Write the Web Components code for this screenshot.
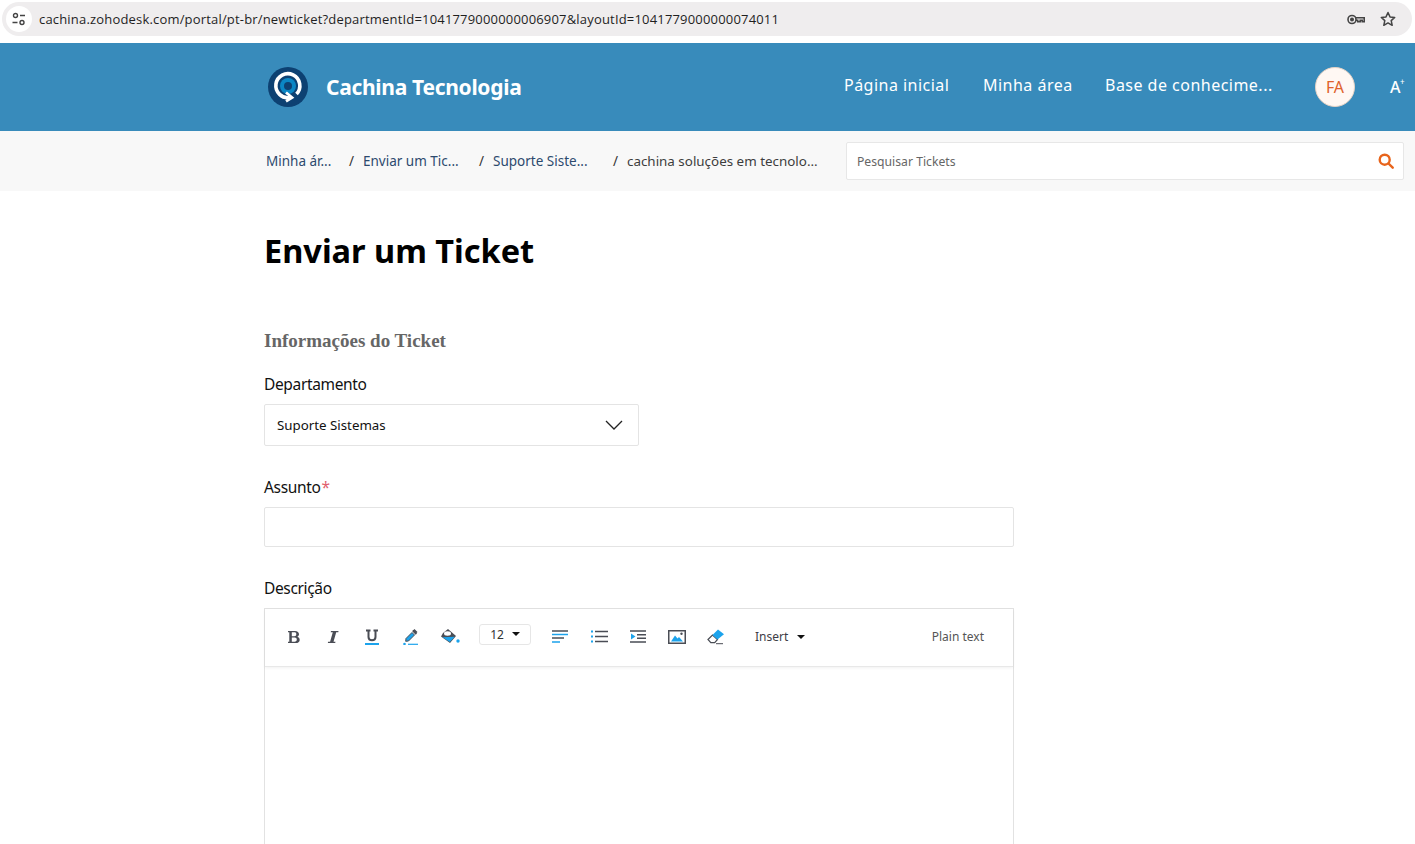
<!DOCTYPE html>
<html lang="pt-BR">
<head>
<meta charset="utf-8">
<title>Enviar um Ticket</title>
<style>
  html, body { margin: 0; height: 844px; overflow: hidden; background: #fff; }
  body { font-family: "Noto Sans", "DejaVu Sans", sans-serif; color: #000; }
</style>
</head>
<body>
<browser-bar url="cachina.zohodesk.com/portal/pt-br/newticket?departmentId=1041779000000006907&amp;layoutId=1041779000000074011"></browser-bar>
<site-header></site-header>
<crumb-bar></crumb-bar>
<ticket-form></ticket-form>

<script>
class BrowserBar extends HTMLElement {
  constructor() {
    super();
    this.attachShadow({ mode: 'open' });
    this.shadowRoot.innerHTML = `
      <style>
        :host { display: block; height: 43px; padding: 2px 3px 0 2px; box-sizing: border-box; background: #fff; }
        .pill { display: flex; align-items: center; height: 34px; border-radius: 17px; background: #efedee; padding: 0 16px 0 4px; }
        .site { width: 26px; height: 26px; border-radius: 50%; background: #fff; display: flex; align-items: center; justify-content: center; margin-right: 7px; }
        .url { flex: 1; font: 13px "Open Sans", sans-serif; color: #1f1f1f; white-space: nowrap; letter-spacing: .18px; }
        .icons { display: flex; gap: 15px; align-items: center; }
      </style>
      <div class="pill">
        <div class="site">
          <svg width="16" height="14" viewBox="0 0 16 14" fill="none" stroke="#444" stroke-width="1.4">
            <circle cx="4.5" cy="3.5" r="2"/><path d="M9 3.5h5M1.5 10.5h5"/><circle cx="11" cy="10.5" r="2"/>
          </svg>
        </div>
        <span class="url"></span>
        <div class="icons">
          <svg width="18" height="11" viewBox="0 0 18 11" fill="none" stroke="#444" stroke-width="1.600">
            <circle cx="5" cy="5.500" r="4"/><path d="M9 3.800h8.200v4h-2v-1.500h-2v1.500h-2.500v-1.500h-1.700"/><circle cx="5" cy="5.500" r="1.200" fill="#444"/>
          </svg>
          <svg width="16" height="16" viewBox="0 0 16 16" fill="none" stroke="#444" stroke-width="1.500" stroke-linejoin="round">
            <path d="M8 1.500l2 4.400 4.700.5-3.500 3.200 1 4.700L8 11.900l-4.200 2.400 1-4.700L1.300 6.400 6 5.900z"/>
          </svg>
        </div>
      </div>
    `;
  }
  connectedCallback() {
    this.shadowRoot.querySelector('.url').textContent = this.getAttribute('url');
  }
}

class SiteHeader extends HTMLElement {
  constructor() {
    super();
    this.attachShadow({ mode: 'open' });
    this.shadowRoot.innerHTML = `
      <style>
        :host { display: flex; align-items: center; height: 88px; background: #388bbb; color: #fff; padding-left: 268px; box-sizing: border-box; }
        .logo { width: 40px; height: 40px; flex: none; }
        h1 { margin: 0 0 0 18px; font: bold 21px "Noto Sans", sans-serif; letter-spacing: -.3px; width: 518px; white-space: nowrap; }
        nav { display: flex; font-size: 16px; margin-top: -5px; letter-spacing: .48px; }
        nav a { white-space: nowrap; color: #fff; }
        nav a:nth-child(1) { width: 139px; }
        nav a:nth-child(2) { width: 122px; }
        nav a:nth-child(3) { width: 210px; }
        .avatar { width: 38px; height: 38px; border-radius: 50%; background: #fff8f3; border: 1px solid #e6d3c5; color: #e0622a; font-size: 16px; display: flex; align-items: center; justify-content: center; flex: none; }
        .size { margin-left: 35px; font-size: 16px; font-weight: 500; position: relative; line-height: 16px; }
        .size sup { position: absolute; left: 10px; top: -1px; font-size: 8px; line-height: 1; }
      </style>
      <svg class="logo" viewBox="0 0 40 40">
        <circle cx="20" cy="20" r="20" fill="#0d4172"/>
        <circle cx="20" cy="19" r="8" fill="#0b86c4"/>
        <circle cx="20" cy="19" r="4" fill="#0d4172"/>
        <path d="M22 30.500A12 12 0 1 1 28.500 27" fill="none" stroke="#fff" stroke-width="3.600"/>
        <path d="M18 25.500l6 5-6 3.800" fill="none" stroke="#fff" stroke-width="2.800"/>
      </svg>
      <h1>Cachina Tecnologia</h1>
      <nav>
        <a>Página inicial</a>
        <a>Minha área</a>
        <a>Base de conhecime...</a>
      </nav>
      <div class="avatar">FA</div>
      <div class="size">A<sup>+</sup></div>
    `;
  }
}

class CrumbBar extends HTMLElement {
  constructor() {
    super();
    this.attachShadow({ mode: 'open' });
    this.shadowRoot.innerHTML = `
      <style>
        :host { display: flex; align-items: center; height: 60px; background: #f8f8f8; padding: 0 11px 0 266px; box-sizing: border-box; }
        .crumbs { display: flex; width: 580px; flex: none; font-size: 13.500px; color: #2d4a6e; white-space: nowrap; margin-top: -1px; }
        .crumbs span { display: block; }
        .sep { color: #333; }
        .last { color: #3d3d3d; font-size: 13.400px; }
        .search { flex: 1; height: 38px; box-sizing: border-box; border: 1px solid #e7e7e7; border-radius: 2px; background: #fff; display: flex; align-items: center; justify-content: space-between; padding: 0 9px 0 10px; font-size: 12.200px; color: #666; }
      </style>
      <div class="crumbs">
        <span style="width:83px">Minha ár...</span>
        <span class="sep" style="width:14px">/</span>
        <span style="width:116px">Enviar um Tic...</span>
        <span class="sep" style="width:14px">/</span>
        <span style="width:120px">Suporte Siste...</span>
        <span class="sep" style="width:14px">/</span>
        <span class="last">cachina soluções em tecnolo...</span>
      </div>
      <div class="search">
        <span>Pesquisar Tickets</span>
        <svg width="16" height="16" viewBox="0 0 16 16" fill="none" stroke="#e8641b" stroke-width="2.400">
          <circle cx="6.700" cy="6.700" r="5"/><path d="M10.500 10.500l4.200 4.200" stroke-linecap="round"/>
        </svg>
      </div>
    `;
  }
}

class FormField extends HTMLElement {
  constructor() {
    super();
    this.attachShadow({ mode: 'open' });
    this.shadowRoot.innerHTML = `
      <style>
        :host { display: block; }
        label { display: block; font-size: 15.500px; line-height: 22px; margin-bottom: 9px; color: #111; letter-spacing: -.35px; }
        .req { color: #e0616f; display: none; margin-left: 1px; }
        :host([required]) .req { display: inline; }
      </style>
      <label></label>
      <slot></slot>
    `;
  }
  connectedCallback() {
    const label = this.shadowRoot.querySelector('label');
    label.innerHTML = '<span class="name"></span><span class="req">*</span>';
    label.querySelector('.name').textContent = this.getAttribute('label');
  }
}

class RichEditor extends HTMLElement {
  constructor() {
    super();
    this.attachShadow({ mode: 'open' });
    const dark = '#4a4d55', blue = '#1ca3ec';
    this.shadowRoot.innerHTML = `
      <style>
        :host { display: block; width: 750px; height: 260px; box-sizing: border-box; border: 1px solid #e2e2e2; border-bottom: 0; }
        .bar { display: flex; align-items: center; height: 58px; box-sizing: border-box; padding: 0 29px 2px 19px; border-bottom: 1px solid #e8e8e8; box-shadow: 0 1px 3px rgba(0,0,0,.06); }
        .btn { width: 20px; height: 20px; margin-right: 19px; flex: none; display: flex; align-items: center; justify-content: center; }
        .size { flex: none; width: 52px; height: 21px; box-sizing: border-box; border: 1px solid #e6e6e6; border-radius: 3px; font-size: 12px; color: #333; display: flex; align-items: center; justify-content: center; gap: 8px; margin: -5px 19px 0 0; }
        .caret { width: 0; height: 0; border: 4px solid transparent; border-top-color: #111; border-bottom: 0; }
        .insert { font-size: 12px; color: #3d3d46; display: flex; align-items: center; gap: 9px; margin-left: 29px; }
        .plain { margin-left: auto; font-size: 12px; color: #555; }
        svg { display: block; }
      </style>
      <div class="bar">
        <div class="btn"><svg width="14" height="14" viewBox="0 0 14 14"><path fill-rule="evenodd" fill="${dark}" d="M1 1h7c2.500 0 4 1.300 4 3.200 0 1.200-.7 2.200-1.800 2.600 1.500.4 2.500 1.500 2.500 3.100 0 2.100-1.600 3.100-4.200 3.100H1v-1.200h1.300V2.200H1zM4.800 2.300v3.900h2.500c1.300 0 2-.7 2-2s-.7-1.900-2-1.900zM4.800 7.400v4.300h2.800c1.400 0 2.200-.8 2.200-2.200s-.8-2.100-2.200-2.100z"/></svg></div>
        <div class="btn"><svg width="12" height="14" viewBox="0 0 12 14"><path fill="${dark}" d="M4 1h7.500l-.2 1.300H9.200L6.500 11.700h2l-.3 1.300H.8l.3-1.300h2l2.700-9.400H3.700z"/></svg></div>
        <div class="btn"><svg width="14" height="16" viewBox="0 0 14 16"><path fill="none" stroke="${dark}" stroke-width="2" d="M1 1.500h4.500M3.500 1.500v6.500c0 2.200 1.300 3.200 3.500 3.200s3.500-1 3.500-3.200V1.500M8.500 1.500h4.500"/><path stroke="${blue}" stroke-width="2" d="M0 15h14"/></svg></div>
        <div class="btn"><svg width="16" height="16" viewBox="0 0 16 16"><path fill="${dark}" d="M10.500 1l1-1 3 3-1 1 .5.500-1.300 1.300-3.500-3.500L10 1z"/><path fill="${blue}" stroke="${dark}" d="M9 3.500l2.500 2.500-6 6-2.800.3.300-2.800z"/><circle cx="1.500" cy="15" r="1.300" fill="${blue}"/><path stroke="${blue}" stroke-width="1.200" d="M5 15.300h10"/></svg></div>
        <div class="btn"><svg width="20" height="16" viewBox="0 0 20 16"><path fill="${dark}" d="M8 0l8 7-6 7L1 7.500 3 4z"/><path fill="${blue}" d="M2.500 8.300l12.300-.6-5 5.300z"/><ellipse cx="7.500" cy="4.500" rx="3.500" ry="2.200" fill="#fff"/><circle cx="18" cy="12" r="1.700" fill="${blue}"/></svg></div>
        <div class="size">12<span class="caret"></span></div>
        <div class="btn"><svg width="16" height="13" viewBox="0 0 16 13"><path stroke="${dark}" stroke-width="1.500" d="M0 1h16M0 8h12"/><path stroke="${blue}" stroke-width="1.500" d="M0 4.500h16M0 12h8"/></svg></div>
        <div class="btn"><svg width="17" height="13" viewBox="0 0 17 13"><path stroke="${dark}" stroke-width="1.600" d="M4 1.500h13M4 6.500h13M4 11.500h13"/><path stroke="${blue}" stroke-width="1.800" d="M0 1.500h2M0 6.500h2M0 11.500h2"/></svg></div>
        <div class="btn"><svg width="16" height="13" viewBox="0 0 16 13"><path stroke="${dark}" stroke-width="1.500" d="M0 1h16M7 4.700h9M7 8.300h9M0 12h16"/><path fill="${blue}" d="M1 3.500l4.500 3-4.500 3z"/></svg></div>
        <div class="btn"><svg width="18" height="14" viewBox="0 0 18 14"><rect x=".75" y=".75" width="16.500" height="12.500" fill="#fff" stroke="${dark}" stroke-width="1.500"/><path fill="${blue}" d="M3 11.500l4-6 2.500 3 1.500-1.500 4 4.500z"/><circle cx="13.500" cy="3.700" r="1.200" fill="${dark}"/></svg></div>
        <div class="btn" style="margin-right:0"><svg width="18" height="16" viewBox="0 0 18 16"><path fill="#fff" stroke="${dark}" stroke-width="1.200" d="M1 10.500L5.500 6l5 4.500-2.800 3.200H3.800z"/><path fill="${blue}" d="M5.500 6l5.500-5.500 6 4.700-6.500 5.300z"/><path stroke="${dark}" d="M9 14.700h7"/></svg></div>
        <div class="insert">Insert <span class="caret"></span></div>
        <div class="plain">Plain text</div>
      </div>
    `;
  }
}

class TicketForm extends HTMLElement {
  constructor() {
    super();
    this.attachShadow({ mode: 'open' });
    this.shadowRoot.innerHTML = `
      <style>
        :host { display: block; padding: 36px 0 0 264px; }
        h2 { margin: 0; font: bold 32.500px/48px "Noto Sans", sans-serif; color: #000; }
        h3 { margin: 54px 0 20px; font: bold 19px/24px "Liberation Serif", serif; color: #666; }
        .select { width: 375px; height: 42px; box-sizing: border-box; border: 1px solid #e4e4e4; border-radius: 2px; display: flex; align-items: center; justify-content: space-between; padding: 0 15px 0 12px; font-size: 13.300px; color: #111; }
        .input { width: 750px; height: 40px; box-sizing: border-box; border: 1px solid #e4e4e4; border-radius: 2px; }
        form-field + form-field { margin-top: 30px; }
      </style>
      <h2>Enviar um Ticket</h2>
      <h3>Informações do Ticket</h3>
      <form-field label="Departamento">
        <div class="select">
          <span>Suporte Sistemas</span>
          <svg width="18" height="10" viewBox="0 0 18 10" fill="none" stroke="#222" stroke-width="1.300"><path d="M1 1l8 8 8-8"/></svg>
        </div>
      </form-field>
      <form-field label="Assunto" required><div class="input"></div></form-field>
      <form-field label="Descrição"><rich-editor></rich-editor></form-field>
    `;
  }
}

customElements.define('browser-bar', BrowserBar);
customElements.define('site-header', SiteHeader);
customElements.define('crumb-bar', CrumbBar);
customElements.define('form-field', FormField);
customElements.define('rich-editor', RichEditor);
customElements.define('ticket-form', TicketForm);
</script>
</body>
</html>
